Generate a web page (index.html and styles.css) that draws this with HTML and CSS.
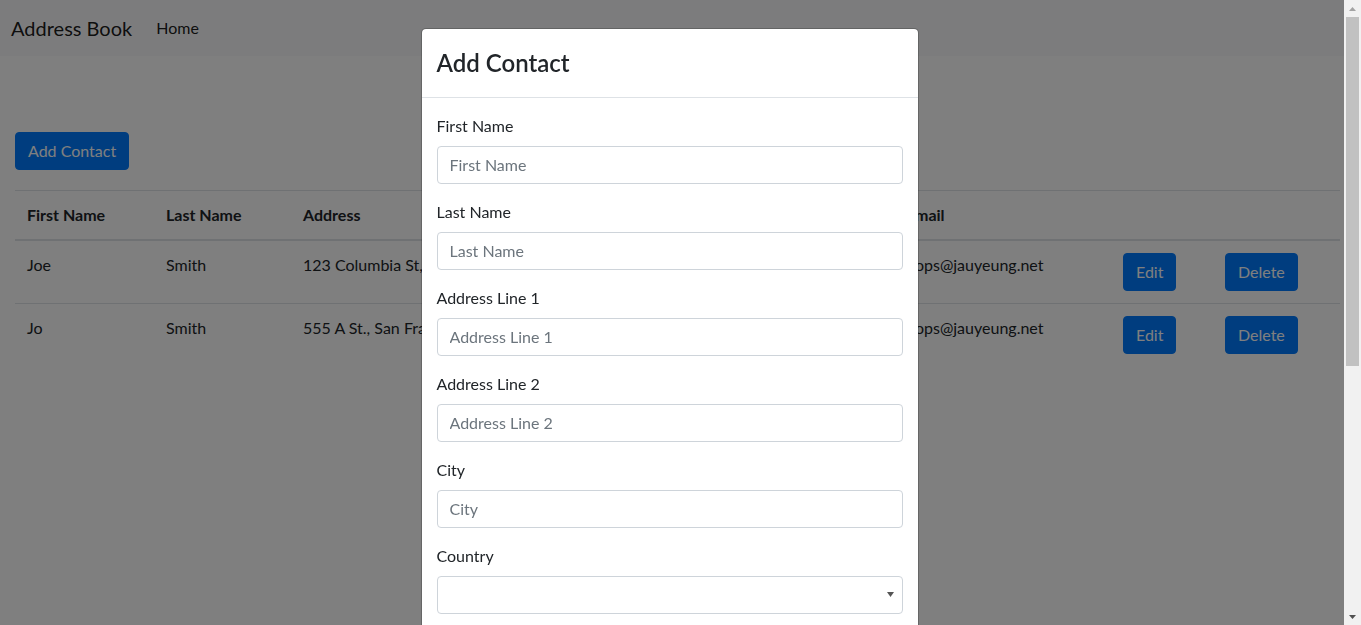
FILE: index.html
```html
<!DOCTYPE html>
<html lang="en">
<head>
<meta charset="utf-8">
<title>Address Book</title>
<link rel="stylesheet" href="styles.css">
</head>
<body>
<div class="page">
  <nav class="navbar">
    <a class="brand" href="#">Address Book</a>
    <a class="nav-link" href="#">Home</a>
  </nav>
  <main class="container">
    <button class="btn btn-primary" type="button">Add Contact</button>
    <table class="table">
      <colgroup>
        <col class="c1"><col class="c2"><col class="c3"><col class="c4"><col class="c5"><col class="c6">
      </colgroup>
      <thead>
        <tr><th>First Name</th><th>Last Name</th><th>Address</th><th>Email</th><th></th><th></th></tr>
      </thead>
      <tbody>
        <tr>
          <td>Joe</td><td>Smith</td><td>123 Columbia St, San Francisco, CA, United States</td><td>hops@jauyeung.net</td>
          <td><button class="btn btn-primary" type="button">Edit</button></td>
          <td><button class="btn btn-primary" type="button">Delete</button></td>
        </tr>
        <tr>
          <td>Jo</td><td>Smith</td><td>555 A St., San Francisco, CA, United States</td><td>hops@jauyeung.net</td>
          <td><button class="btn btn-primary" type="button">Edit</button></td>
          <td><button class="btn btn-primary" type="button">Delete</button></td>
        </tr>
      </tbody>
    </table>
  </main>
</div>

<div class="modal-layer">
  <div class="modal-area">
    <div class="modal-content">
      <div class="modal-header">
        <h5 class="modal-title">Add Contact</h5>
      </div>
      <form class="modal-body">
        <div class="form-group">
          <label>First Name</label>
          <input class="form-control" type="text" placeholder="First Name">
        </div>
        <div class="form-group">
          <label>Last Name</label>
          <input class="form-control" type="text" placeholder="Last Name">
        </div>
        <div class="form-group">
          <label>Address Line 1</label>
          <input class="form-control" type="text" placeholder="Address Line 1">
        </div>
        <div class="form-group">
          <label>Address Line 2</label>
          <input class="form-control" type="text" placeholder="Address Line 2">
        </div>
        <div class="form-group">
          <label>City</label>
          <input class="form-control" type="text" placeholder="City">
        </div>
        <div class="form-group">
          <label>Country</label>
          <div class="select-wrap">
            <select class="form-control select"><option></option></select>
            <svg class="select-arrow" width="7" height="5" viewBox="0 0 7 5"><path d="M0 0H7L3.5 5Z" fill="#555"/></svg>
          </div>
        </div>
      </form>
    </div>
  </div>
  <div class="scrollbar">
    <div class="sb-btn"><svg width="7" height="4" viewBox="0 0 7 4"><path d="M0 4L3.5 0L7 4Z" fill="#a3a3a3"/></svg></div>
    <div class="sb-track"><div class="sb-thumb"></div></div>
    <div class="sb-btn"><svg width="7" height="4" viewBox="0 0 7 4"><path d="M0 0H7L3.5 4Z" fill="#505050"/></svg></div>
  </div>
</div>
</body>
</html>
```
FILE: styles.css
```css
* { box-sizing: border-box; }

html, body {
  margin: 0;
  height: 625px;
  overflow: hidden;
}

body {
  font-family: Lato, "Segoe UI", "Noto Sans", sans-serif;
  font-size: 16px;
  line-height: 1.5;
  color: #212529;
  background: #fff;
}

a { text-decoration: none; }

.navbar {
  display: flex;
  align-items: center;
  padding: 8px 16px 8px 11px;
  background: #f8f9fa;
}

.brand {
  font-size: 20px;
  line-height: 30px;
  padding: 5px 0;
  margin-right: 16px;
  color: rgba(0, 0, 0, 0.9);
}

.nav-link {
  padding: 8px;
  color: rgba(0, 0, 0, 0.9);
}

.container {
  padding: 76px 21px 0 15px;
}

.btn {
  display: inline-block;
  font-family: inherit;
  font-size: 16px;
  line-height: 24px;
  padding: 6px 12px;
  border: 1px solid transparent;
  border-radius: 4px;
  cursor: pointer;
}

.btn-primary {
  color: #fff;
  background: #007bff;
  border-color: #007bff;
}

.table {
  margin-top: 20px;
  width: 100%;
  border-collapse: collapse;
  table-layout: fixed;
}

.c1 { width: 139px; }
.c2 { width: 137px; }
.c3 { width: 603px; }
.c4 { width: 217px; }
.c5 { width: 102px; }
.c6 { width: 127px; }

.table th,
.table td {
  padding: 12px;
  text-align: left;
  vertical-align: top;
  border-top: 1px solid #dee2e6;
  white-space: nowrap;
  overflow: hidden;
}

.table th { font-weight: 700; }

.table thead th {
  border-bottom: 2px solid #dee2e6;
}

/* modal overlay */
.modal-layer {
  position: fixed;
  inset: 0;
  display: flex;
}

.modal-area {
  flex: 1;
  display: flex;
  justify-content: center;
  align-items: flex-start;
  padding: 28px 5px 0 0;
  background: rgba(0, 0, 0, 0.5);
  overflow: hidden;
}

.modal-content {
  flex: none;
  width: 498px;
  background: #fff;
  border: 1px solid rgba(0, 0, 0, 0.2);
  border-radius: 5px;
  background-clip: padding-box;
}

.modal-header {
  padding: 16px 15px;
  border-bottom: 1px solid #dee2e6;
}

.modal-title {
  margin: 0;
  font-size: 24px;
  line-height: 36px;
  font-weight: 600;
}

.modal-body {
  padding: 16px 15px;
}

.form-group {
  margin-bottom: 16px;
}

.form-group label {
  display: block;
  margin-bottom: 8px;
}

.form-control {
  display: block;
  width: 100%;
  height: 38px;
  padding: 5px 12px 7px;
  font-family: inherit;
  font-size: 16px;
  line-height: 24px;
  color: #495057;
  background: #fff;
  border: 1px solid #ced4da;
  border-radius: 4px;
}

.form-control::placeholder {
  color: #6c757d;
  opacity: 1;
}

.select-wrap {
  position: relative;
}

.select {
  appearance: none;
  -webkit-appearance: none;
}

.select-arrow {
  position: absolute;
  right: 9px;
  top: 16px;
}

/* scrollbar */
.scrollbar {
  flex: none;
  width: 17px;
  display: flex;
  flex-direction: column;
  background: #f1f1f1;
}

.sb-btn {
  height: 17px;
  display: flex;
  align-items: center;
  justify-content: center;
}

.sb-track {
  flex: 1;
  padding: 0 2px;
}

.sb-thumb {
  height: 349px;
  background: #c1c1c1;
}
```
